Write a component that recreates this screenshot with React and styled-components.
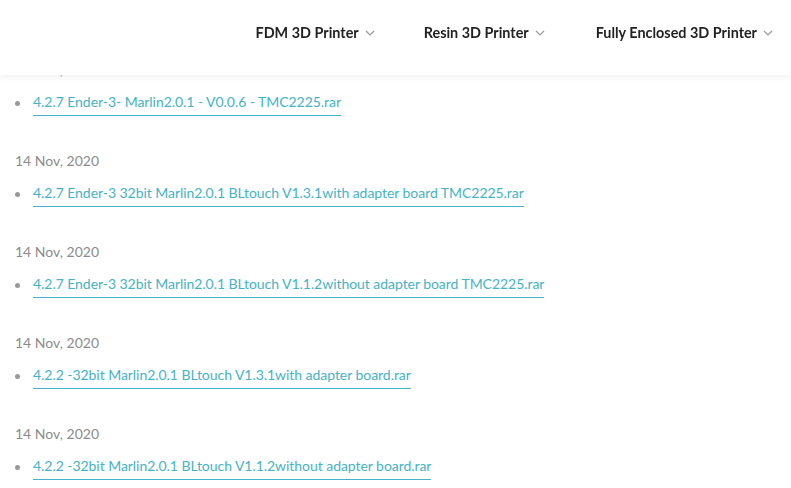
import React from "react"
import styled, { createGlobalStyle } from "styled-components"

const Global = createGlobalStyle`
  html, body {
    margin: 0;
    padding: 0;
    background: #fff;
    font-family: Lato, "Open Sans", sans-serif;
    overflow: hidden;
  }
`

const Header = styled.header`
  position: fixed;
  top: 0;
  left: 0;
  right: 0;
  height: 75px;
  background: #fff;
  box-shadow: 0 2px 6px rgba(0, 0, 0, 0.06);
  display: flex;
  justify-content: flex-end;
  align-items: flex-start;
  z-index: 10;
`

const Nav = styled.nav`
  display: flex;
  padding-top: 24px;
  padding-right: 18px;
`

const NavItem = styled.a`
  display: flex;
  align-items: center;
  gap: 6px;
  margin-left: ${(p) => p.$gap || 0}px;
  font-size: 14.4px;
  font-weight: 700;
  color: #222;
  text-decoration: none;
  line-height: 18px;
`

const Chevron = () => (
  <svg width="10" height="6" viewBox="0 0 10 6" fill="none">
    <path d="M1 1l4 4 4-4" stroke="#999" strokeWidth="1.2" />
  </svg>
)

const Main = styled.main`
  padding: 61px 15px 0;
`

const Entry = styled.section`
  height: 91px;
`

const Date = styled.div`
  font-size: 14px;
  color: #8c8c8c;
  line-height: 18px;
`

const List = styled.ul`
  list-style: none;
  margin: 14px 0 0;
  padding: 0;
`

const Item = styled.li`
  display: flex;
  align-items: flex-start;
`

const Dot = styled.span`
  width: 5px;
  height: 5px;
  border-radius: 50%;
  background: #999;
  margin: 8px 13px 0 0;
  flex-shrink: 0;
`

const FileLink = styled.a`
  font-size: 14px;
  line-height: 18px;
  letter-spacing: -0.05px;
  color: #45b3c6;
  text-decoration: none;
  padding-bottom: 4px;
  border-bottom: 1px solid #45b3c6;
`

const files = [
  "4.2.7 Ender-3- Marlin2.0.1 - V0.0.6 - TMC2225.rar",
  "4.2.7 Ender-3 32bit Marlin2.0.1 BLtouch V1.3.1with adapter board TMC2225.rar",
  "4.2.7 Ender-3 32bit Marlin2.0.1 BLtouch V1.1.2without adapter board TMC2225.rar",
  "4.2.2 -32bit Marlin2.0.1 BLtouch V1.3.1with adapter board.rar",
  "4.2.2 -32bit Marlin2.0.1 BLtouch V1.1.2without adapter board.rar",
]

export default function App() {
  return (
    <>
      <Global />
      <Header>
        <Nav>
          <NavItem href="#">FDM 3D Printer <Chevron /></NavItem>
          <NavItem href="#" $gap={49}>Resin 3D Printer <Chevron /></NavItem>
          <NavItem href="#" $gap={51}>Fully Enclosed 3D Printer <Chevron /></NavItem>
        </Nav>
      </Header>
      <Main>
        {files.map((f) => (
          <Entry key={f}>
            <Date>14 Nov, 2020</Date>
            <List>
              <Item>
                <Dot />
                <FileLink href="#">{f}</FileLink>
              </Item>
            </List>
          </Entry>
        ))}
      </Main>
    </>
  )
}
